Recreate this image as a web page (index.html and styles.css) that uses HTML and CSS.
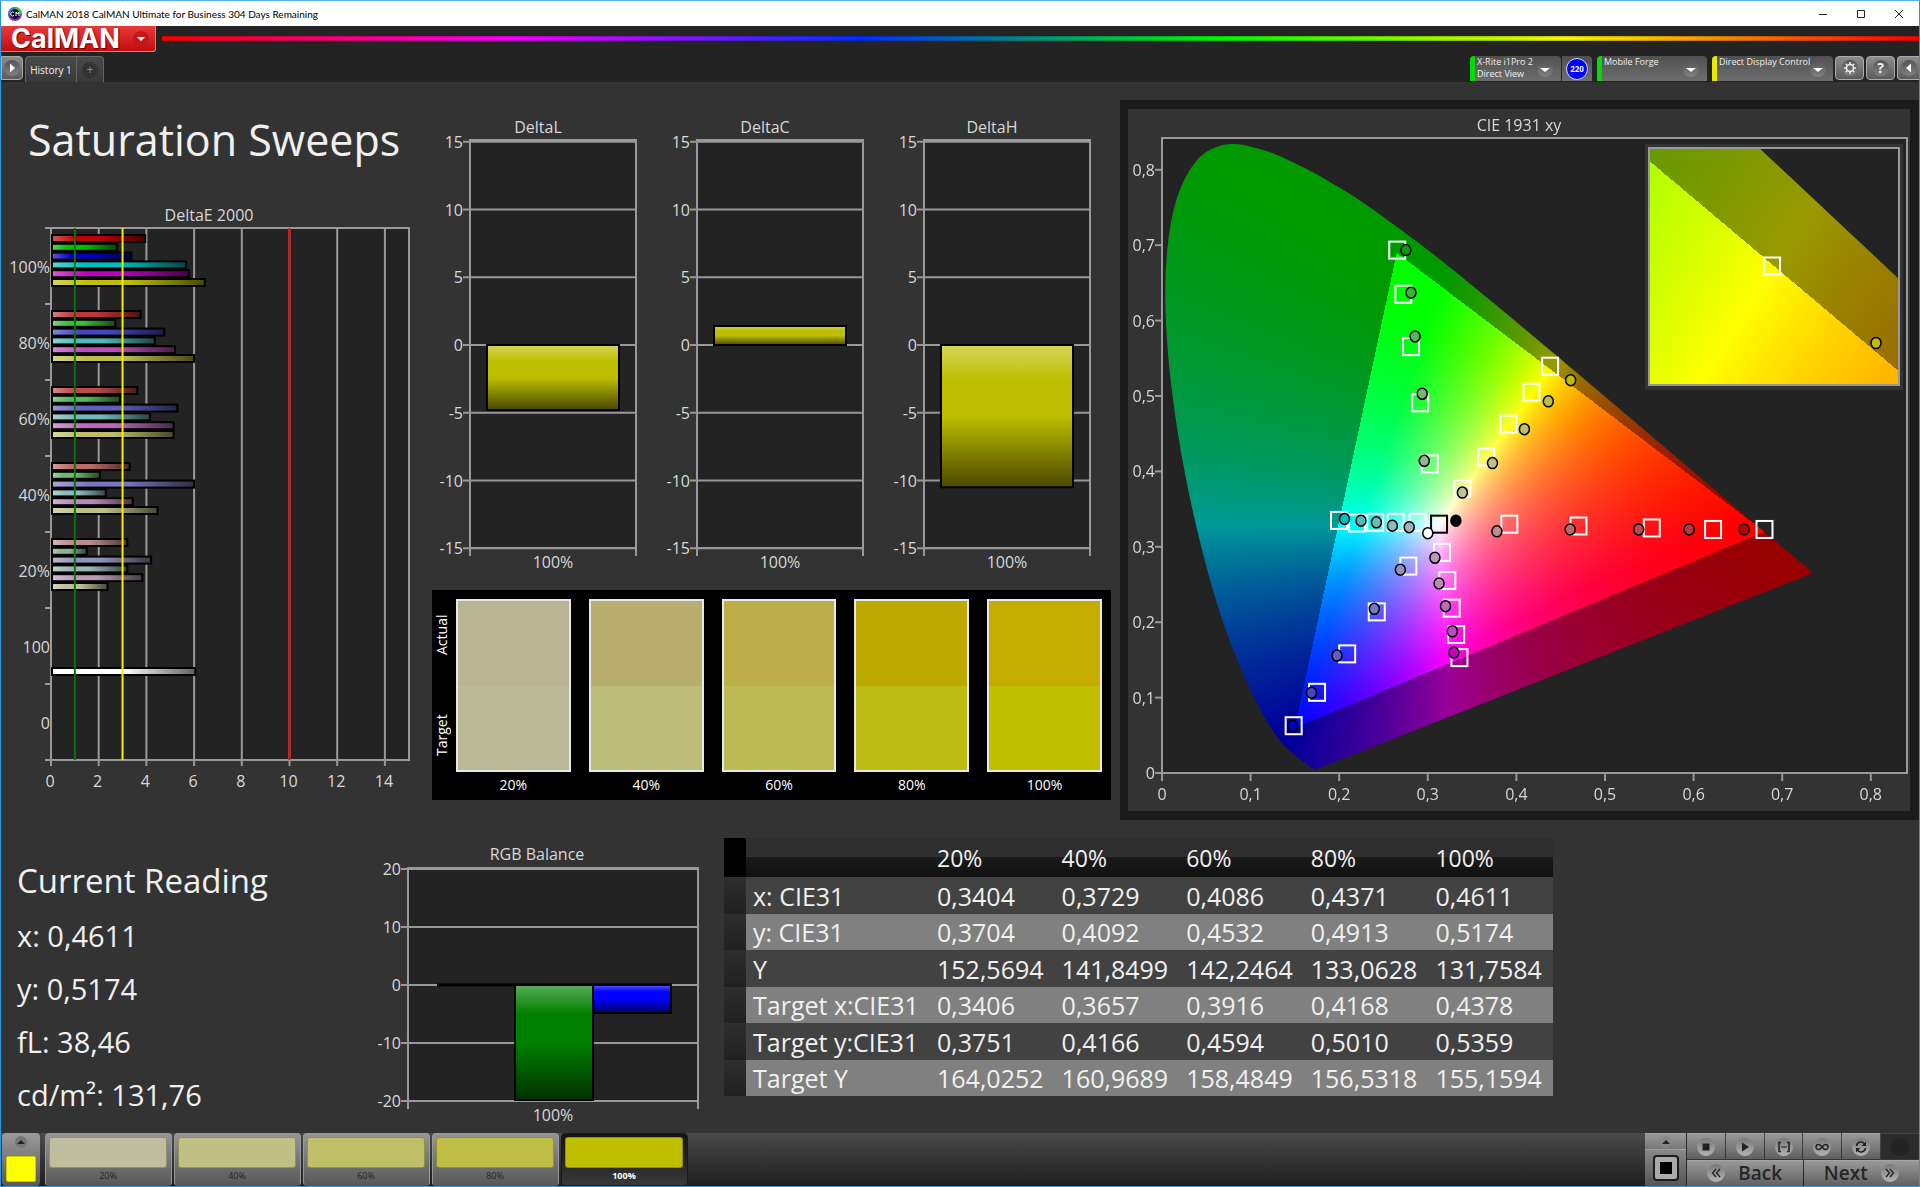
FILE: index.html
```html
<!DOCTYPE html>
<html lang="en">
<head>
<meta charset="utf-8">
<title>CalMAN 2018 CalMAN Ultimate for Business 304 Days Remaining</title>
<link rel="stylesheet" href="styles.css">
</head>
<body>
<header class="titlebar">
  <svg class="app-icon" viewBox="0 0 14 14" aria-hidden="true">
    <circle cx="7" cy="7" r="6" fill="#111" stroke="#7a2be0" stroke-width="2"/>
    <path d="M7 1a6 6 0 0 1 6 6" fill="none" stroke="#2fd03a" stroke-width="2"/>
    <path d="M1 7a6 6 0 0 1 6-6" fill="none" stroke="#2b8be8" stroke-width="2"/>
    <path d="M6 5.500a2 2 0 1 0 0 3M8 9V5l1.500 2L11 5v4" fill="none" stroke="#fff"/>
  </svg>
  <span class="window-title">CalMAN 2018 CalMAN Ultimate for Business 304 Days Remaining</span>
  <div class="window-controls">
    <button aria-label="Minimize"><svg viewBox="0 0 10 10"><path d="M1 5.500h8"/></svg></button>
    <button aria-label="Maximize"><svg viewBox="0 0 10 10"><path d="M1.500 1.500h7v7h-7z"/></svg></button>
    <button aria-label="Close"><svg viewBox="0 0 10 10"><path d="M1 1l8 8M9 1l-8 8"/></svg></button>
  </div>
</header>

<div class="brandbar">
  <button class="logo"><span>CalMAN</span><span class="knob knob-red"><svg viewBox="0 0 16 16"><path d="M4 6h8l-4 4z"/></svg></span></button>
  <div class="rainbow"></div>
</div>

<div class="tabbar">
  <button class="tool tool-play" aria-label="Expand"><span class="knob"><svg viewBox="0 0 16 16"><path d="M6 3.500v9l5-4.500z"/></svg></span></button>
  <div class="tabs">
    <button class="tab">History 1</button>
    <button class="tab tab-add" aria-label="Add tab"><span class="knob knob-dark">+</span></button>
  </div>
  <div class="devices">
    <button class="device device-meter ready"><span class="device-name">X-Rite i1Pro 2<br>Direct View</span><span class="knob"><svg viewBox="0 0 16 16"><path d="M3 7h10l-5 4z"/></svg></span></button>
    <button class="meter-badge"><span>220</span></button>
    <button class="device device-source ready"><span class="device-name">Mobile Forge</span><span class="knob"><svg viewBox="0 0 16 16"><path d="M3 7h10l-5 4z"/></svg></span></button>
    <button class="device device-display waiting"><span class="device-name">Direct Display Control</span><span class="knob"><svg viewBox="0 0 16 16"><path d="M3 7h10l-5 4z"/></svg></span></button>
    <button class="tool" aria-label="Settings"><span class="knob"><svg viewBox="0 0 16 16"><circle cx="8" cy="8" r="3.500" fill="none" stroke="#eee" stroke-width="1.500"/><path d="M8 2v2M8 12v2M2 8h2M12 8h2M3.800 3.800l1.400 1.400M10.800 10.800l1.400 1.400M12.200 3.800l-1.400 1.400M5.200 10.800l-1.400 1.400" stroke="#eee" stroke-width="1.500"/></svg></span></button>
    <button class="tool" aria-label="Help"><span class="knob help">?</span></button>
    <button class="tool tool-collapse" aria-label="Collapse"><span class="knob"><svg viewBox="0 0 16 16"><path d="M10 3.500v9l-5-4.500z"/></svg></span></button>
  </div>
</div>

<main>
  <section class="upper">
    <div class="overview">
      <h1>Saturation Sweeps</h1>
      <svg id="delta-e" class="chart" viewBox="0 0 429 596" role="img" aria-label="DeltaE 2000"></svg>
    </div>
    <div class="middle">
      <div class="deltas">
        <svg class="chart delta" viewBox="0 0 227 470" data-title="DeltaL" data-value="-4.8"></svg>
        <svg class="chart delta" viewBox="0 0 227 470" data-title="DeltaC" data-value="1.4"></svg>
        <svg class="chart delta" viewBox="0 0 227 470" data-title="DeltaH" data-value="-10.5"></svg>
      </div>
      <div class="swatches">
        <div class="swatch-side"><span>Actual</span><span>Target</span></div>
        <div class="patches">
          <figure><div class="patch p20"></div><figcaption>20%</figcaption></figure>
          <figure><div class="patch p40"></div><figcaption>40%</figcaption></figure>
          <figure><div class="patch p60"></div><figcaption>60%</figcaption></figure>
          <figure><div class="patch p80"></div><figcaption>80%</figcaption></figure>
          <figure><div class="patch p100"></div><figcaption>100%</figcaption></figure>
        </div>
      </div>
    </div>
    <div class="cie">
      <canvas id="cie-fill" width="782" height="702"></canvas>
      <svg id="cie" class="chart" viewBox="0 0 782 702" role="img" aria-label="CIE 1931 xy"></svg>
    </div>
  </section>

  <section class="lower">
    <div class="reading">
      <h2>Current Reading</h2>
      <p>x: 0,4611</p>
      <p>y: 0,5174</p>
      <p>fL: 38,46</p>
      <p>cd/m²: 131,76</p>
    </div>
    <svg id="rgb" class="chart" viewBox="0 0 350 290" role="img" aria-label="RGB Balance"></svg>
    <div class="data">
      <table>
        <thead><tr><th class="grip"></th><th class="name"></th><th>20%</th><th>40%</th><th>60%</th><th>80%</th><th>100%</th></tr></thead>
        <tbody>
          <tr><td class="grip"></td><td>x: CIE31</td><td>0,3404</td><td>0,3729</td><td>0,4086</td><td>0,4371</td><td>0,4611</td></tr>
          <tr><td class="grip"></td><td>y: CIE31</td><td>0,3704</td><td>0,4092</td><td>0,4532</td><td>0,4913</td><td>0,5174</td></tr>
          <tr><td class="grip"></td><td>Y</td><td>152,5694</td><td>141,8499</td><td>142,2464</td><td>133,0628</td><td>131,7584</td></tr>
          <tr><td class="grip"></td><td>Target x:CIE31</td><td>0,3406</td><td>0,3657</td><td>0,3916</td><td>0,4168</td><td>0,4378</td></tr>
          <tr><td class="grip"></td><td>Target y:CIE31</td><td>0,3751</td><td>0,4166</td><td>0,4594</td><td>0,5010</td><td>0,5359</td></tr>
          <tr><td class="grip"></td><td>Target Y</td><td>164,0252</td><td>160,9689</td><td>158,4849</td><td>156,5318</td><td>155,1594</td></tr>
        </tbody>
      </table>
    </div>
  </section>
</main>

<footer>
  <button class="current" aria-label="Current color"><svg class="up" viewBox="0 0 12 12"><circle cx="6" cy="6" r="6" fill="#777"/><path d="M2 8h8L6 4z" fill="#222"/></svg><span class="current-color"></span></button>
  <div class="steps">
    <button class="step s20"><span class="chip"></span>20%</button>
    <button class="step s40"><span class="chip"></span>40%</button>
    <button class="step s60"><span class="chip"></span>60%</button>
    <button class="step s80"><span class="chip"></span>80%</button>
    <button class="step s100 active"><span class="chip"></span>100%</button>
  </div>
  <div class="transport">
    <div class="pattern">
      <button class="pattern-up" aria-label="Show patterns"><svg class="up" viewBox="0 0 12 12"><circle cx="6" cy="6" r="6" fill="#888"/><path d="M2 8h8L6 4z" fill="#222"/></svg></button>
      <button class="pattern-now" aria-label="Pattern window"><svg viewBox="0 0 26 26"><rect x="1" y="1" width="24" height="24" rx="3" fill="#aaa" stroke="#1c1c1c" stroke-width="2"/><rect x="7" y="7" width="12" height="12" fill="#000"/></svg></button>
    </div>
    <div class="controls">
      <div class="icons">
        <button aria-label="Stop"><span class="disc"><svg viewBox="0 0 16 16"><path d="M4.500 4.500h7v7h-7z" fill="#222"/></svg></span></button>
        <button aria-label="Read"><span class="disc"><svg viewBox="0 0 16 16"><path d="M5 3.500v9l7-4.500z" fill="#222"/></svg></span></button>
        <button aria-label="Read series"><span class="disc"><svg viewBox="0 0 16 16"><path d="M5 3.500H3v9h2M11 3.500h2v9h-2" fill="none" stroke="#222" stroke-width="1.600"/><path d="M5.500 8h5" stroke="#222" stroke-width="1.600" stroke-dasharray="1.300 .6"/></svg></span></button>
        <button aria-label="Read continuous"><span class="disc"><svg viewBox="0 0 16 16"><path d="M8 8C6.500 6 5.500 5.500 4.500 5.500a2.500 2.500 0 0 0 0 5C5.500 10.500 6.500 10 8 8s2.500-2.500 3.500-2.500a2.500 2.500 0 0 1 0 5C10.500 10.500 9.500 10 8 8z" fill="none" stroke="#222" stroke-width="1.500"/></svg></span></button>
        <button aria-label="Refresh"><span class="disc"><svg viewBox="0 0 16 16"><path d="M3.500 7A4.500 4.500 0 0 1 12 5.500M12.500 9A4.500 4.500 0 0 1 4 10.500" fill="none" stroke="#222" stroke-width="1.600"/><path d="M13 2.500V7H8.500zM3 13.500V9h4.500z" fill="#222"/></svg></span></button>
        <button class="off" aria-label="Record" disabled><span class="disc"></span></button>
      </div>
      <div class="nav">
        <button><span class="disc"><svg viewBox="0 0 16 16"><path d="M8 4L4.500 8 8 12M12 4L8.500 8l3.500 4" fill="none" stroke="#222" stroke-width="1.300"/></svg></span>Back</button>
        <button>Next<span class="disc"><svg viewBox="0 0 16 16"><path d="M4 4l3.500 4L4 12M8 4l3.500 4L8 12" fill="none" stroke="#222" stroke-width="1.300"/></svg></span></button>
      </div>
    </div>
  </div>
</footer>
<script src="charts.js"></script>
</body>
</html>
```
FILE: styles.css
```css
* { box-sizing: border-box; }

body {
  margin: 0;
  min-height: 100vh;
  display: flex;
  flex-direction: column;
  background: #333;
  border: 1px solid #2f96d8;
  border-top-color: #55b0ea;
  color: #f0f0f0;
  font-family: "Open Sans", "Noto Sans", sans-serif;
  font-size: 16px;
}

button {
  margin: 0;
  padding: 0;
  border: 0;
  background: none;
  color: inherit;
  font: inherit;
}

svg { display: block; }

/* Window title */
.titlebar {
  display: flex;
  align-items: center;
  height: 25px;
  padding-left: 7px;
  background: #fff;
  color: #000;
  font-family: Lato, sans-serif;
  font-size: 10px;
}
.app-icon { width: 14px; height: 14px; margin-right: 4px; }
.window-controls { display: flex; gap: 28px; margin-left: auto; padding-right: 15px; }
.window-controls svg { width: 10px; height: 10px; fill: none; stroke: #222; }

/* Brand strip */
.brandbar { display: flex; height: 26px; background: #232323; }
.logo {
  display: flex;
  align-items: center;
  justify-content: space-between;
  width: 155px;
  padding: 0 6px 0 10px;
  border: 1px solid #999;
  border-width: 0 1px 1px 0;
  border-radius: 0 0 3px 0;
  background: linear-gradient(#e8393b, #c30d10);
  color: #fff;
  font: 700 27px/24px Inter, sans-serif;
  text-shadow: 1px 1px 1px #600;
}
.rainbow {
  flex: 1;
  height: 5px;
  margin: 10px 0 0 6px;
  background: linear-gradient(rgba(0, 0, 0, .25), transparent 40%, transparent 60%, rgba(0, 0, 0, .3)),
    linear-gradient(90deg, #f00, #f0f 20%, #0030ff 40%, #0f0 60%, #ff0 80%, #f00);
}

.knob {
  display: grid;
  place-items: center;
  flex: none;
  width: 16px;
  height: 16px;
  border-radius: 50%;
  background: linear-gradient(#555, #808080);
}
.knob svg { width: 16px; height: 16px; fill: #fff; }
.knob-red { background: #c4181b; }
.knob-dark { background: #333; color: #888; font-size: 12px; line-height: 16px; }
.help { font-size: 14px; font-weight: 700; line-height: 16px; }

/* Tabs and devices */
.tabbar { display: flex; height: 30px; padding-top: 4px; background: #232323; font-size: 9px; }
.tabs { display: flex; margin-left: 2px; border: 1px solid #666; border-bottom: 0; border-radius: 4px 4px 0 0; background: linear-gradient(#4a4a4a, #383838); }
.tab { width: 50px; height: 25px; font-size: 10px; white-space: nowrap; }
.tab-add { display: grid; place-items: center; width: 27px; border-left: 1px solid #666; }
.tool {
  display: grid;
  place-items: center;
  width: 29px;
  height: 24px;
  border: 1px solid #aaa;
  border-radius: 4px;
  background: linear-gradient(#8c8c8c, #5c5c5c);
}
.tool-play { width: 22px; border-radius: 0 4px 4px 0; }
.tool-collapse { width: 22px; border-right: 0; border-radius: 4px 0 0 4px; }
.devices { display: flex; gap: 2px; margin-left: auto; }
.device {
  display: flex;
  align-items: center;
  justify-content: space-between;
  height: 25px;
  padding: 0 8px 0 2px;
  border-left: 5px solid;
  border-radius: 4px 4px 0 0;
  background: linear-gradient(#505050, #6e6e6e);
  text-align: left;
  line-height: 12px;
}
.device-name { align-self: flex-start; white-space: nowrap; }
.ready { border-left-color: #0d0; }
.waiting { border-left-color: #e8e800; }
.device-meter { width: 91px; margin-right: -1px; }
.device-source { width: 110px; margin: 0 3px; }
.device-display { width: 121px; }
.meter-badge { width: 30px; height: 25px; background: linear-gradient(#505050, #6e6e6e); border-radius: 0 4px 0 0; }
.meter-badge span {
  display: grid;
  place-items: center;
  width: 22px;
  height: 22px;
  margin: 0 auto;
  border: 1px solid #cdf;
  border-radius: 50%;
  background: #00f;
  font-size: 8px;
  font-weight: 700;
}

/* Workspace */
.chart { width: 100%; height: auto; font-size: 16px; fill: #d8d8d8; }
.upper { display: grid; grid-template-columns: 429fr 690fr 799fr; }
h1, h2, p, figure { margin: 0; font-weight: 400; }
h1 { padding: 28px 0 0 27px; font-size: 43px; line-height: 60px; height: 122px; white-space: nowrap; }
.middle { padding: 28px 9px 0 0; }
.deltas { display: grid; grid-template-columns: repeat(3, 1fr); }
.swatches {
  display: flex;
  gap: 6px;
  height: 210px;
  margin: 10px 0 0 2px;
  padding: 9px 9px 0 2px;
  background: #000;
  color: #fff;
  font-size: 14px;
}
.swatch-side {
  display: flex;
  flex-direction: row-reverse;
  justify-content: space-between;
  width: 16px;
  height: 173px;
  padding: 16px 0;
  writing-mode: vertical-rl;
  transform: rotate(180deg);
  line-height: 16px;
}
.patches { flex: 1; display: grid; grid-template-columns: repeat(5, 1fr); gap: 18px; }
.patch { height: 173px; border: 2px solid #e8e8e8; }
figcaption { padding-top: 3px; text-align: center; line-height: 20px; }
.p20 { background: linear-gradient(#b8b494 50%, #babb96 50%); }
.p40 { background: linear-gradient(#b9ae70 50%, #bbbc78 50%); }
.p60 { background: linear-gradient(#beae4a 50%, #bcba52 50%); }
.p80 { background: linear-gradient(#bca900 50%, #bcbb14 50%); }
.p100 { background: linear-gradient(#c4ad00 50%, #bfbf00 50%); }

.cie { display: grid; align-self: start; margin: 18px 0 0; border: 9px solid #1b1b1b; border-left-width: 8px; }
.cie > * { grid-area: 1 / 1; }
canvas { width: 100%; height: auto; }

.lower { display: grid; grid-template-columns: 369fr 350fr 1199fr; align-items: start; padding-top: 18px; }
.reading { padding: 15px 0 0 16px; font-size: 29px; line-height: 53px; white-space: nowrap; }
h2 { font-size: 33px; line-height: 56px; }
.data { padding-left: 4px; }
table { width: 829px; max-width: 100%; table-layout: fixed; border-collapse: collapse; font-size: 25px; line-height: 36px; white-space: nowrap; }
th { height: 39px; padding: 0 0 0 7px; background: linear-gradient(#2e2e2e 48%, #1b1b1b 50%, #101010); font-size: 23px; font-weight: 400; text-align: left; }
td { height: 37px; padding: 0 0 0 7px; background: #424242; }
tbody tr:nth-child(even) td { height: 36px; background: #808080; }
th.grip { width: 22px; background: #000; }
tbody tr td.grip,
tbody tr:nth-child(even) td.grip { background: linear-gradient(#2e2e2e, #202020); }
.name { width: 184px; }

/* Bottom bar */
footer {
  display: flex;
  height: 53px;
  margin-top: auto;
  padding-left: 1px;
  background: linear-gradient(#4a4a4a, #1e1e1e);
  color: #262626;
}
.current {
  width: 38px;
  padding: 0 4px 2px;
  border-radius: 4px;
  background: linear-gradient(#9a9a9a, #585858);
}
.up { width: 12px; height: 12px; margin: 0 auto; }
.current-color { display: block; height: 26px; margin-top: 8px; border: 1px solid #cc0; border-radius: 2px; background: #ff0; }
.steps { display: flex; gap: 2px; margin-left: 5px; }
.step {
  width: 127px;
  padding: 2px 4px 0 3px;
  border: 1px solid #999;
  border-bottom-color: #555;
  border-radius: 4px;
  background: linear-gradient(#959595, #585858);
  font-size: 9px;
  line-height: 16px;
}
.chip { display: block; height: 31px; border: 1px solid rgba(60, 60, 0, .35); border-radius: 3px; }
.s20 .chip { background: #bfbf9f; }
.s40 .chip { background: #c0bf86; }
.s60 .chip { background: #c0bf69; }
.s80 .chip { background: #bfbf48; }
.s100 .chip { background: #bfbf00; }
.step.active { border-color: #1a1a1a; background: linear-gradient(#141414, #383838); color: #fff; font-weight: 700; }

.transport { display: flex; margin-left: auto; }
.pattern { width: 42px; border-right: 1px solid #2a2a2a; }
.pattern button { display: block; width: 100%; border: 1px solid #a0a0a0; border-width: 1px 0 0; }
.pattern-up { height: 16px; background: linear-gradient(#999, #777); }
.pattern-now { height: 37px; background: linear-gradient(#888, #555); }
.pattern-now svg { width: 26px; height: 26px; margin: 0 auto; }
.controls { width: 232px; }
.icons, .nav { display: grid; gap: 1px; }
.icons { grid-template-columns: repeat(6, 1fr); height: 26px; margin-bottom: 1px; }
.nav { grid-template-columns: 1fr 1fr; height: 26px; font-size: 19px; font-weight: 600; }
.controls button { display: flex; align-items: center; justify-content: center; gap: 13px; border-top: 1px solid #a5a5a5; background: linear-gradient(#999, #606060); line-height: 22px; }
.nav button { padding-bottom: 2px; }
.disc { width: 18px; height: 18px; padding: 1px; border-radius: 50%; background: linear-gradient(#787878, #b4b4b4); }
.disc svg { width: 16px; height: 16px; }
.controls .off { background: #2c2c2c; border-color: #444; }
.off .disc { background: #242424; }
```
FILE: charts.js
```js
const NS = 'http://www.w3.org/2000/svg';
let gradients = 0;

function add(parent, tag, attrs, text) {
  const node = document.createElementNS(NS, tag);
  for (const key in attrs) node.setAttribute(key, attrs[key]);
  if (text !== undefined) node.textContent = text;
  parent.appendChild(node);
  return node;
}
function line(svg, x1, y1, x2, y2, stroke = '#999', width = 2) {
  add(svg, 'line', { x1, y1, x2, y2, stroke, 'stroke-width': width });
}
function label(svg, x, y, text, anchor = 'middle') {
  add(svg, 'text', { x, y, 'text-anchor': anchor }, text);
}
function shade(rgb, f) {
  return 'rgb(' + rgb.map(c => Math.round(f < 0 ? c * (1 + f) : c + (255 - c) * f)).join(',') + ')';
}
// Glossy bar: light at its start, dark at its end
function bar(svg, x, y, width, height, rgb, vertical) {
  const id = 'g' + gradients++;
  const g = add(svg, 'linearGradient', vertical ? { id, x1: 0, y1: 0, x2: 0, y2: 1 } : { id });
  add(g, 'stop', { offset: 0, 'stop-color': shade(rgb, 0.35) });
  add(g, 'stop', { offset: 0.25, 'stop-color': shade(rgb, 0) });
  add(g, 'stop', { offset: 0.5, 'stop-color': shade(rgb, 0) });
  add(g, 'stop', { offset: 1, 'stop-color': shade(rgb, -0.62) });
  add(svg, 'rect', { x, y, width, height, fill: `url(#${id})`, stroke: '#000', 'stroke-width': 2 });
}

function drawDeltaE() {
  const svg = document.getElementById('delta-e');
  const x0 = 50, unit = 23.85, top = 24, bottom = 556, right = 408, step = 76;
  add(svg, 'rect', { x: x0, y: top, width: right - x0, height: bottom - top, fill: '#232323' });
  label(svg, 208, 17, 'DeltaE 2000');
  for (let v = 0; v <= 14; v += 2) {
    line(svg, x0 + v * unit, top, x0 + v * unit, bottom + 6);
    label(svg, x0 - 1 + v * unit, 583, v);
  }
  add(svg, 'rect', { x: x0, y: top, width: right - x0, height: bottom - top, fill: 'none', stroke: '#999', 'stroke-width': 2 });
  ['100%', '80%', '60%', '40%', '20%', '100', '0'].forEach((name, i) => {
    label(svg, x0 - 1, top + i * step + 45, name, 'end');
    line(svg, x0 - 6, top + i * step, x0, top + i * step);
  });
  line(svg, x0 - 6, bottom, x0, bottom);
  const values = [
    [3.95, 2.77, 3.37, 5.66, 5.78, 6.45],
    [3.76, 2.7, 4.75, 4.35, 5.2, 6],
    [3.62, 2.9, 5.3, 4.15, 5.14, 5.14],
    [3.3, 2.05, 6, 2.3, 3.43, 4.47],
    [3.2, 1.5, 4.2, 3.2, 3.83, 2.37]
  ];
  const colors = [
    [[190, 0, 0], [0, 190, 0], [0, 0, 190], [0, 190, 190], [190, 0, 190], [190, 190, 0]],
    [[190, 55, 55], [60, 190, 60], [70, 70, 190], [80, 185, 185], [190, 75, 190], [190, 190, 70]],
    [[190, 75, 75], [85, 185, 85], [95, 95, 190], [115, 185, 185], [190, 105, 190], [190, 190, 105]],
    [[190, 105, 105], [110, 185, 110], [120, 120, 190], [140, 185, 185], [190, 135, 190], [190, 190, 135]],
    [[190, 140, 140], [140, 180, 140], [145, 145, 185], [155, 180, 180], [185, 155, 185], [190, 190, 155]]
  ];
  values.forEach((row, i) => row.forEach((v, j) =>
    bar(svg, x0 + 1, top + i * step + 7 + j * 8.800, v * unit - 1, 7, colors[i][j])));
  bar(svg, x0 + 1, top + 5 * step + 60, 6.050 * unit - 1, 7, [255, 255, 255]);
  line(svg, x0 + unit, top, x0 + unit, bottom, '#0a700a');
  line(svg, x0 + 3 * unit, top, x0 + 3 * unit, bottom, '#f0f000');
  line(svg, x0 + 10 * unit, top, x0 + 10 * unit, bottom, '#f00');
}

function verticalFrame(svg, o) {
  add(svg, 'rect', { x: o.left, y: o.top, width: o.right - o.left, height: o.bottom - o.top, fill: '#232323', stroke: '#999', 'stroke-width': 2 });
  label(svg, o.titleX, o.titleY, o.title);
  label(svg, (o.left + o.right) / 2, o.bottom + 20, '100%');
  for (let v = -o.max; v <= o.max; v += o.step) {
    const y = o.zero - v * o.unit;
    line(svg, o.left - 7, y, o.right, y);
    label(svg, o.left - 7, y + 6, v, 'end');
  }
  line(svg, o.left, o.bottom, o.left, o.bottom + 8);
  line(svg, o.right, o.bottom, o.right, o.bottom + 8);
}

function drawDelta(svg) {
  const o = { left: 40, right: 206, top: 30, bottom: 438, zero: 235, unit: 13.550, max: 15, step: 5, titleX: 108, titleY: 23, title: svg.dataset.title };
  verticalFrame(svg, o);
  const v = Number(svg.dataset.value);
  bar(svg, 57, v > 0 ? o.zero - v * o.unit : o.zero, 132, Math.abs(v) * o.unit, [190, 190, 0], true);
}

function drawRgb() {
  const svg = document.getElementById('rgb');
  const o = { left: 38, right: 328, top: 30, bottom: 263, zero: 147, unit: 5.800, max: 20, step: 10, titleX: 167, titleY: 22, title: 'RGB Balance' };
  verticalFrame(svg, o);
  line(svg, 67, 147, 302, 147, '#000', 3);
  bar(svg, 145, 147, 78, 115, [0, 128, 0], true);
  bar(svg, 223, 147, 78, 28, [0, 0, 255], true);
}

// Panel coordinates of the chromaticity plot
const CIE = { left: 34, right: 779, top: 29, bottom: 664, sx: 886, sy: 754 };
const INSET = { left: 521, right: 771, top: 39, bottom: 276, cx: 646, cy: 157, sx: 4400, sy: 4160, x: 0.4378, y: 0.5359 };
const LOCUS = [[.1741, .005], [.1714, .0051], [.1644, .0109], [.1566, .0177], [.144, .0297], [.1355, .0399], [.1241, .0578],
  [.1096, .0868], [.0913, .1327], [.0687, .2007], [.0454, .295], [.0235, .4127], [.0082, .5384], [.0039, .6548], [.0139, .7502],
  [.0389, .812], [.0743, .8338], [.1142, .8262], [.1547, .8059], [.1929, .7816], [.2296, .7543], [.3016, .6923], [.3731, .6245],
  [.4441, .5547], [.5125, .4866], [.5752, .4242], [.627, .3725], [.6658, .334], [.6915, .3083], [.719, .2809], [.7347, .2653]];

// Hue comes from the sRGB primaries; full brightness marks the P3 gamut
function chroma(x, y) {
  const X = x / y, Z = (1 - x - y) / y;
  const inside = Math.min(
    2.4935 * X - 0.9314 - 0.4027 * Z,
    -0.8295 * X + 1.7627 + 0.0236 * Z,
    0.0358 * X - 0.0762 + 0.9569 * Z) >= 0;
  const rgb = [
    3.2406 * X - 1.5372 - 0.4986 * Z,
    -0.9689 * X + 1.8758 + 0.0415 * Z,
    0.0557 * X - 0.2040 + 1.0570 * Z
  ];
  const max = Math.max(...rgb);
  const gain = inside ? 255 : 153;
  return rgb.map(c => gain * Math.max(0, c) / max);
}

function paint(ctx, map, box, toXY) {
  const layer = document.createElement('canvas');
  layer.width = 782;
  layer.height = 702;
  const lctx = layer.getContext('2d');
  const img = lctx.createImageData(782, 702);
  for (let py = box.top; py < box.bottom; py++) {
    for (let px = box.left; px < box.right; px++) {
      const [x, y] = toXY(px + .5, py + .5);
      if (y <= 0) continue;
      const [r, g, b] = chroma(x, y);
      const i = (py * 782 + px) * 4;
      img.data[i] = r;
      img.data[i + 1] = g;
      img.data[i + 2] = b;
      img.data[i + 3] = 255;
    }
  }
  lctx.putImageData(img, 0, 0);
  ctx.save();
  ctx.beginPath();
  ctx.rect(box.left, box.top, box.right - box.left, box.bottom - box.top);
  ctx.clip();
  ctx.beginPath();
  const pts = LOCUS.map(p => map(p[0], p[1]));
  const n = pts.length;
  ctx.moveTo(...pts[0]);
  // Catmull-Rom curve through the locus points
  for (let i = 0; i < n - 1; i++) {
    const a = pts[Math.max(i - 1, 0)], b = pts[i], c = pts[i + 1], d = pts[Math.min(i + 2, n - 1)];
    ctx.bezierCurveTo(b[0] + (c[0] - a[0]) / 6, b[1] + (c[1] - a[1]) / 6, c[0] - (d[0] - b[0]) / 6, c[1] - (d[1] - b[1]) / 6, c[0], c[1]);
  }
  ctx.closePath();
  ctx.fillStyle = ctx.createPattern(layer, 'no-repeat');
  ctx.fill();
  ctx.restore();
}

function drawCie() {
  const ctx = document.getElementById('cie-fill').getContext('2d');
  const at = (x, y) => [CIE.left + x * CIE.sx, CIE.bottom - y * CIE.sy];
  ctx.fillStyle = '#232323';
  ctx.fillRect(CIE.left, CIE.top, CIE.right - CIE.left, CIE.bottom - CIE.top);
  paint(ctx, at, CIE, (px, py) => [(px - CIE.left) / CIE.sx, (CIE.bottom - py) / CIE.sy]);
  ctx.fillStyle = '#333';
  ctx.fillRect(INSET.left - 4, INSET.top - 4, 258, 246);
  ctx.fillStyle = '#232323';
  ctx.fillRect(INSET.left, INSET.top, 250, 237);
  paint(ctx, (x, y) => [INSET.cx + (x - INSET.x) * INSET.sx, INSET.cy - (y - INSET.y) * INSET.sy], INSET,
    (px, py) => [INSET.x + (px - INSET.cx) / INSET.sx, INSET.y + (INSET.cy - py) / INSET.sy]);

  const svg = document.getElementById('cie');
  label(svg, 391, 22, 'CIE 1931 xy');
  add(svg, 'rect', { x: CIE.left, y: CIE.top, width: CIE.right - CIE.left, height: CIE.bottom - CIE.top, fill: 'none', stroke: '#999', 'stroke-width': 2 });
  add(svg, 'rect', { x: INSET.left, y: INSET.top, width: 250, height: 237, fill: 'none', stroke: '#999', 'stroke-width': 2 });
  for (let i = 0; i <= 8; i++) {
    const name = i ? '0,' + i : '0';
    const [x, y] = at(i / 10, i / 10);
    line(svg, x, CIE.bottom, x, CIE.bottom + 8);
    label(svg, x, 691, name);
    line(svg, CIE.left - 7, y, CIE.left, y);
    label(svg, CIE.left - 7, y + 6, name, 'end');
  }
  const square = (cx, cy, stroke = '#fff') =>
    add(svg, 'rect', { x: cx - 8, y: cy - 8.500, width: 16, height: 17, fill: 'none', stroke, 'stroke-width': 2 });
  const dot = (cx, cy, fill) =>
    add(svg, 'ellipse', { cx, cy, rx: 5, ry: 5.500, fill, stroke: '#000', 'stroke-width': 1.500 });
  [[.2655, .6935], [.2724, .635], [.281, .5655], [.2914, .491], [.3023, .41], [.438, .5395], [.417, .505], [.391, .4627],
    [.366, .419], [.339, .377], [.1998, .335], [.220, .3315], [.2407, .3325], [.2637, .3325], [.2885, .3325], [.392, .33],
    [.47, .3276], [.5528, .325], [.622, .323], [.68, .323], [.316, .2926], [.322, .2554], [.327, .2186], [.332, .1836],
    [.3357, .153], [.278, .2744], [.2424, .2137], [.209, .158], [.175, .107], [.1486, .0627]
  ].forEach(p => square(...at(...p)));
  square(...at(.3127, .33), '#000');
  [[.2752, .6935, '#0a9a0a'], [.281, .637, '#3cb43c'], [.2856, .579, '#5ab45a'], [.2937, .503, '#78b478'], [.296, .414, '#96b496'],
    [.4612, .521, '#bebe00'], [.436, .493, '#bebe46'], [.409, .456, '#bebe69'], [.373, .411, '#bebe87'], [.339, .372, '#bebe9b'],
    [.206, .337, '#00bebe'], [.2246, .3346, '#50b9b9'], [.242, .3325, '#73b9b9'], [.26, .328, '#8cb9b9'], [.279, .326, '#9bb4b4'],
    [.3, .318, '#fff'], [.3317, .3347, '#000'], [.378, .3205, '#be8c8c'], [.4607, .323, '#be6969'], [.538, .323, '#be4b4b'],
    [.595, .323, '#be3737'], [.657, .323, '#be0000'], [.308, .2855, '#b99bb9'], [.3127, .2514, '#be87be'], [.32, .2213, '#be69be'],
    [.3277, .188, '#be4bbe'], [.3294, .1597, '#be00be'], [.269, .2696, '#9191b9'], [.2396, .2177, '#7878be'],
    [.1975, .1557, '#5f5fbe'], [.1687, .1065, '#4646be'], [.1474, .0622, '#0000be']
  ].forEach(p => dot(...at(p[0], p[1]), p[2]));
  square(644, 157);
  dot(748, 234, '#bebe00');
}

drawDeltaE();
document.querySelectorAll('.delta').forEach(drawDelta);
drawRgb();
drawCie();
```
